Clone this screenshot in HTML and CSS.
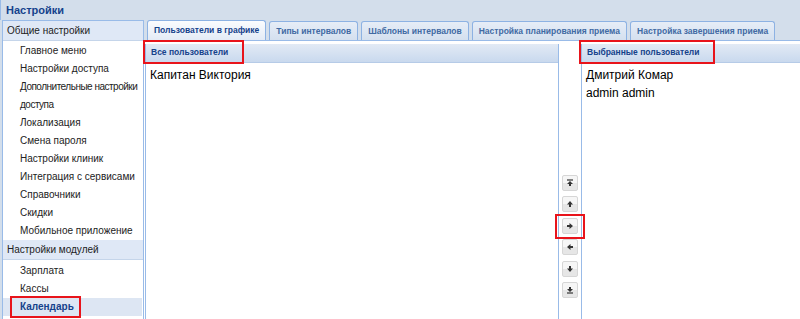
FILE: index.html
```html
<!DOCTYPE html>
<html lang="ru">

<head>
    <meta charset="UTF-8">
    <title>Настройки</title>
    <link rel="stylesheet" href="styles.css">
</head>

<body>
    <div class="window">
        <div class="window__title">Настройки</div>
        <div class="window__main">
            <div class="sidebar">
                <div class="sidebar__head">Общие настройки</div>
                <ul class="sidebar__list">
                    <li>Главное меню</li>
                    <li>Настройки доступа</li>
                    <li class="tight">Дополнительные настройки<br>доступа</li>
                    <li>Локализация</li>
                    <li>Смена пароля</li>
                    <li>Настройки клиник</li>
                    <li>Интеграция с сервисами</li>
                    <li>Справочники</li>
                    <li>Скидки</li>
                    <li>Мобильное приложение</li>
                </ul>
                <div class="sidebar__head">Настройки модулей</div>
                <ul class="sidebar__list sidebar__list--modules">
                    <li>Зарплата</li>
                    <li>Кассы</li>
                    <li class="active"><span class="mark">Календарь</span></li>
                </ul>
            </div>
            <div class="tabpanel">
                <div class="tabs">
                    <div class="tab tab--active">Пользователи в графике</div>
                    <div class="tab">Типы интервалов</div>
                    <div class="tab">Шаблоны интервалов</div>
                    <div class="tab">Настройка планирования приема</div>
                    <div class="tab">Настройка завершения приема</div>
                </div>
                <div class="tabbody">
                    <div class="listpanel listpanel--left">
                        <div class="listpanel__head"><span class="mark mark--head">Все пользователи</span></div>
                        <ul class="listpanel__items">
                            <li>Капитан Виктория</li>
                        </ul>
                    </div>
                    <div class="movebtns">
                        <button class="movebtn" title="В начало">
                            <svg viewBox="0 0 8 8" width="8" height="8"><path d="M1 1h6" stroke="#333" stroke-width="1.2"/><path d="M4 2L1 5h2v2h2V5h2z" fill="#333"/></svg>
                        </button>
                        <button class="movebtn" title="Вверх">
                            <svg viewBox="0 0 8 8" width="8" height="8"><path d="M4 1L1 4.5h2V7h2V4.5h2z" fill="#333"/></svg>
                        </button>
                        <button class="movebtn movebtn--marked" title="Добавить">
                            <svg viewBox="0 0 8 8" width="8" height="8"><path d="M7 4L3.5 1v2H1v2h2.5v2z" fill="#333"/></svg>
                        </button>
                        <button class="movebtn" title="Убрать">
                            <svg viewBox="0 0 8 8" width="8" height="8"><path d="M1 4l3.5-3v2H7v2H4.5v2z" fill="#333"/></svg>
                        </button>
                        <button class="movebtn" title="Вниз">
                            <svg viewBox="0 0 8 8" width="8" height="8"><path d="M4 7L1 3.5h2V1h2v2.5h2z" fill="#333"/></svg>
                        </button>
                        <button class="movebtn" title="В конец">
                            <svg viewBox="0 0 8 8" width="8" height="8"><path d="M4 6L1 3h2V1h2v2h2z" fill="#333"/><path d="M1 7h6" stroke="#333" stroke-width="1.2"/></svg>
                        </button>
                    </div>
                    <div class="listpanel listpanel--right">
                        <div class="listpanel__head"><span class="mark mark--head">Выбранные пользователи</span></div>
                        <ul class="listpanel__items">
                            <li>Дмитрий Комар</li>
                            <li>admin admin</li>
                        </ul>
                    </div>
                </div>
            </div>
        </div>
    </div>
</body>

</html>
```

FILE: styles.css
```css
body {
    margin: 0;
    font-family: "Liberation Sans", Arial, sans-serif;
    background-color: #d3deeb;
    overflow: hidden;
}

.window {
    height: 319px;
    display: flex;
    flex-direction: column;
    background-color: #d3deeb;
}

.window__title {
    height: 20px;
    line-height: 20px;
    padding-left: 5px;
    font-size: 11px;
    font-weight: bold;
    color: #15428b;
    border-left: 1px solid #99bbe8;
}

.window__main {
    flex: 1;
    display: flex;
    min-height: 0;
}

/* left menu */
.sidebar {
    width: 140px;
    margin-left: 2px;
    background-color: #fff;
    border-left: 1px solid #99bbe8;
    border-right: 1px solid #99bbe8;
    border-top: 1px solid #99bbe8;
}

.sidebar__head {
    height: 19px;
    line-height: 19px;
    padding-left: 4px;
    font-size: 10px;
    color: #222;
    background-color: #dfe8f6;
    border-bottom: 1px solid #c5d5ea;
}

.sidebar__list {
    list-style: none;
    margin: 0;
    padding: 1px 0 0;
    font-size: 10px;
    color: #222;
}

.sidebar__list li {
    line-height: 18px;
    padding-left: 17px;
}

.sidebar__list li.tight {
    white-space: nowrap;
    letter-spacing: -0.5px;
}

.sidebar__list--modules {
    padding-top: 2px;
}

.sidebar__list li.active {
    background-color: #dde6f3;
    font-weight: bold;
    color: #15428b;
    margin-right: 1px;
}

.mark {
    outline: 2px solid #e8141b;
}

.sidebar__list li.active .mark {
    display: inline-block;
    margin-left: -8px;
    padding: 0 5px 0 8px;
    line-height: 18px;
}

/* tabs */
.tabpanel {
    flex: 1;
    display: flex;
    flex-direction: column;
    min-width: 0;
}

.tabs {
    height: 20px;
    display: flex;
    align-items: flex-end;
    gap: 3px;
    padding-left: 3px;
}

.tab {
    height: 18px;
    line-height: 18px;
    padding: 0 6px;
    font-size: 8.5px;
    font-weight: bold;
    color: #416aa3;
    background: linear-gradient(#e6edf7, #d4e0ef);
    border: 1px solid #8db2e3;
    border-bottom: none;
    border-radius: 3px 3px 0 0;
    white-space: nowrap;
}

.tab--active {
    color: #15428b;
    background: linear-gradient(#fbfcfe, #e3ebf6);
    height: 19px;
}

.tabbody {
    flex: 1;
    display: flex;
    background-color: #fff;
    border-top: 1px solid #99bbe8;
    padding-top: 3px;
    min-height: 0;
}

/* user lists */
.listpanel {
    display: flex;
    flex-direction: column;
}

.listpanel--left {
    width: 412px;
    margin-left: 1px;
    border-left: 1px solid #99bbe8;
    border-right: 1px solid #99bbe8;
}

.listpanel--right {
    flex: 1;
    border-left: 1px solid #99bbe8;
}

.listpanel__head {
    height: 18px;
    line-height: 18px;
    padding-left: 5px;
    font-size: 8.5px;
    font-weight: bold;
    color: #15428b;
    background: linear-gradient(#e2eaf5, #c9d9ee);
    border-bottom: 1px solid #b6cbe7;
}

.mark--head {
    display: inline-block;
    margin-left: -6px;
    padding: 2px 14px 1px 6px;
    line-height: 17px;
    position: relative;
    top: -2px;
}

.listpanel__items {
    list-style: none;
    margin: 0;
    padding: 3px 0 0 4px;
    font-size: 12px;
    color: #000;
}

.listpanel__items li {
    line-height: 18px;
}

.movebtns {
    width: 22px;
    display: flex;
    flex-direction: column;
    align-items: flex-start;
    gap: 5.4px;
    padding-top: 131px;
}

.movebtn {
    width: 16px;
    height: 16px;
    margin-left: 3px;
    padding: 0;
    display: flex;
    align-items: center;
    justify-content: center;
    background: linear-gradient(#f6f6f6 50%, #e6e6e6 50%);
    border: 1px solid #d6d6d6;
    border-radius: 2px;
    cursor: pointer;
}

.movebtn--marked {
    position: relative;
}

.movebtn--marked::after {
    content: "";
    position: absolute;
    left: -8px;
    right: -8px;
    top: -5px;
    bottom: -6px;
    border: 2px solid #e8141b;
}
```
